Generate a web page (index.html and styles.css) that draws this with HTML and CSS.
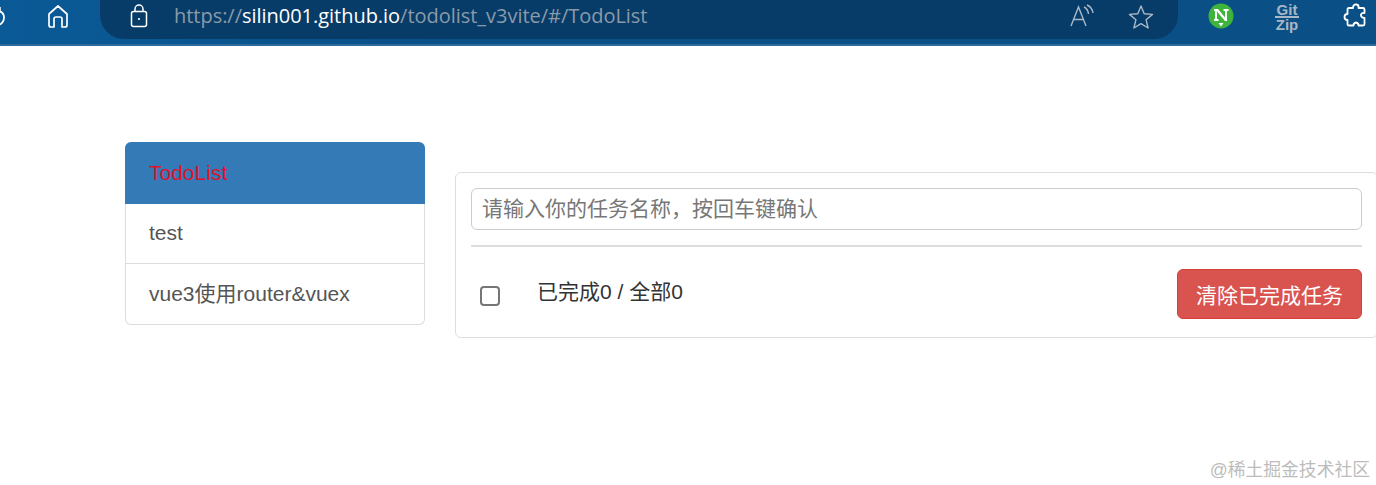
FILE: index.html
```html
<!DOCTYPE html>
<html lang="zh-CN">
<head>
  <meta charset="UTF-8">
  <title>TodoList</title>
  <link rel="stylesheet" href="styles.css">
</head>
<body>

<header class="browser-bar">
  <svg class="icon-reload" width="10" height="28" viewBox="0 0 10 28" fill="none" stroke="#fff" stroke-width="1.8">
    <path d="M-2 7.500 Q4 9 4 14.500 Q4 20 -2 22.500"/>
    <path d="M0 4 L0 9 L-4 9" stroke-width="1.500"/>
  </svg>
  <svg class="icon-home" width="24" height="26" viewBox="0 0 24 26" fill="none" stroke="#fff" stroke-width="1.7" stroke-linejoin="round">
    <path d="M3 11 L12 3 L21 11 V22 Q21 24 19 24 H16 V16 Q16 14 14 14 H10 Q8 14 8 16 V24 H5 Q3 24 3 22 Z"/>
  </svg>
  <div class="address">
    <svg class="icon-lock" width="18" height="24" viewBox="0 0 18 24" fill="none" stroke="#fff" stroke-width="1.500">
      <rect x="1.500" y="7.500" width="15" height="15" rx="2"/>
      <path d="M5 7.500 V5 A4 4 0 0 1 13 5 V7.500"/>
      <circle cx="9" cy="15" r="1.100" fill="#fff" stroke="none"/>
    </svg>
    <span class="url"><span class="url-dim">https://</span><span class="url-host">silin001.github.io</span><span class="url-dim">/todolist_v3vite/#/TodoList</span></span>
    <svg class="icon-read" width="24" height="24" viewBox="0 0 24 24" fill="none" stroke="#a9b9c8" stroke-width="1.400">
      <path d="M1 22 L8.500 3 L16 22 M4 15.500 H13"/>
      <path d="M14 3 Q18 5 18.500 10 M17 1 Q22 3 23 9"/>
    </svg>
    <svg class="icon-star" width="26" height="26" viewBox="0 0 26 26" fill="none" stroke="#a9b9c8" stroke-width="1.400" stroke-linejoin="round">
      <path d="M13 2 L16.200 9.800 L24.500 10.400 L18.100 15.800 L20.100 24 L13 19.600 L5.900 24 L7.900 15.800 L1.500 10.400 L9.800 9.800 Z"/>
    </svg>
  </div>
  <svg class="icon-ext-n" width="26" height="26" viewBox="0 0 26 26">
    <circle cx="13" cy="13" r="12.500" fill="#3fb43c"/>
    <path d="M6 6 H10 L17 14.500 V8 H15.500 V6 H20.500 V8 H19 V18 H17 L9 8.500 V16 H10.500 V18 H6 V16 H7 V8 H6 Z" fill="#fff"/>
    <path d="M10.500 20 H15.500 L13 23.500 Z" fill="#fff"/>
  </svg>
  <div class="gitzip">Git<i></i>Zip</div>
  <svg class="icon-puzzle" width="24" height="26" viewBox="0 0 24 26" fill="none" stroke="#fff" stroke-width="1.800" stroke-linejoin="round">
    <path d="M10 4 Q11 1 13.500 1.500 Q16 2 15.500 5 H20 Q21.500 5 21.500 6.500 V10 Q19 9.500 18 11.500 Q17.500 14.500 21.500 15 V21 Q21.500 22.500 20 22.500 H15.500 Q15.500 19.800 13 19.500 Q10.500 19.800 10.500 22.500 H6 Q4.500 22.500 4.500 21 V17 Q1.500 17 1.500 14 Q1.500 11 4.500 11 V6.500 Q4.500 5 6 5 H10 Z"/>
  </svg>
</header>

<main class="page">
  <nav class="nav-list">
    <a class="nav-item active">TodoList</a>
    <a class="nav-item">test</a>
    <a class="nav-item">vue3使用router&amp;vuex</a>
  </nav>

  <section class="todo-panel">
    <input class="todo-input" type="text" placeholder="请输入你的任务名称，按回车键确认">
    <hr class="todo-line">
    <div class="todo-footer">
      <input class="todo-check" type="checkbox">
      <span class="todo-count">已完成0 / 全部0</span>
      <button class="btn-clear">清除已完成任务</button>
    </div>
  </section>
</main>

<div class="watermark">@稀土掘金技术社区</div>

</body>
</html>
```

FILE: styles.css
```css
* {
  box-sizing: border-box;
}
html, body {
  height: 100%;
}
body {
  margin: 0;
  background: #fff;
  font-family: "Liberation Sans", "Noto Sans CJK SC", sans-serif;
  overflow: hidden;
  position: relative;
}

/* browser chrome */
.browser-bar {
  height: 46px;
  display: flex;
  align-items: flex-start;
  background: linear-gradient(90deg, #0a5a97 0%, #0a4f86 35%, #0a4f86 100%);
  border-bottom: 2px solid #2f6a9b;
  overflow: hidden;
}
.icon-reload {
  margin-top: 3px;
  flex: none;
}
.icon-home {
  margin: 3px 0 0 36px;
  flex: none;
}
.address {
  width: 1078px;
  height: 39px;
  margin-left: 30px;
  flex: none;
  display: flex;
  align-items: flex-start;
  background: #083c68;
  border-radius: 0 0 24px 24px;
  padding-left: 30px;
}
.icon-lock {
  margin-top: 4px;
  flex: none;
}
.url {
  margin: 2px 0 0 26px;
  width: 896px;
  font-family: "Open Sans", sans-serif;
  font-size: 20px;
  line-height: 27px;
  letter-spacing: -0.03px;
  white-space: nowrap;
}
.url-dim {
  color: #8b9aa8;
}
.url-host {
  color: #fff;
}
.icon-read {
  margin-top: 4px;
  flex: none;
}
.icon-star {
  margin: 4px 0 0 34px;
  flex: none;
}
.icon-ext-n {
  margin: 3px 0 0 30px;
  flex: none;
}
.gitzip {
  width: 30px;
  margin: 4px 0 0 38px;
  flex: none;
  font-size: 15px;
  line-height: 12px;
  font-weight: bold;
  color: #a9b7c4;
  text-align: center;
}
.gitzip i {
  display: block;
  width: 24px;
  height: 2px;
  background: #a9b7c4;
  margin: 0 auto 1px;
}
.icon-puzzle {
  margin: 3px 0 0 41px;
  flex: none;
}

/* page */
.page {
  display: flex;
  align-items: flex-start;
  gap: 30px;
  padding: 96px 0 0 125px;
}
.nav-list {
  width: 300px;
  flex: none;
}
.nav-item {
  display: block;
  height: 60px;
  padding: 0 23px;
  font-size: 21px;
  line-height: 57px;
  color: #555;
  border: 1px solid #ddd;
  border-top: 0;
}
.nav-item:last-child {
  height: 61px;
  line-height: 59px;
  border-radius: 0 0 6px 6px;
}
.nav-item.active {
  height: 62px;
  line-height: 62px;
  border: 0;
  padding-left: 24px;
  border-radius: 6px 6px 0 0;
  background: #337ab7;
  color: #e0112b;
}
.todo-panel {
  width: 923px;
  flex: none;
  margin-top: 30px;
  height: 166px;
  padding: 15px;
  border: 1px solid #ddd;
  border-radius: 6px;
}
.todo-input {
  display: block;
  width: 100%;
  height: 42px;
  padding: 0 10px;
  border: 1px solid #ccc;
  border-radius: 6px;
  font-family: inherit;
  font-size: 21px;
  color: #555;
  outline: none;
}
.todo-input::placeholder {
  color: #777;
  opacity: 1;
}
.todo-line {
  height: 2px;
  margin: 15px 0 0;
  border: 0;
  background: #ddd;
}
.todo-footer {
  display: flex;
  align-items: center;
  margin-top: 22px;
  height: 50px;
}
.todo-check {
  appearance: none;
  width: 20px;
  height: 20px;
  margin: 3px 0 0 9px;
  border: 2px solid #767676;
  border-radius: 4px;
  background: #fff;
  flex: none;
}
.todo-count {
  margin: -9px 0 0 37px;
  font-size: 21px;
  color: #333;
}
.btn-clear {
  margin-left: auto;
  width: 185px;
  height: 50px;
  padding: 0;
  border: 1px solid #d43f3a;
  border-radius: 6px;
  background: #d9534f;
  color: #fff;
  font-family: inherit;
  font-size: 21px;
}

.watermark {
  position: absolute;
  right: 6px;
  bottom: 3px;
  font-size: 17.800px;
  line-height: 24px;
  color: #bcbcbc;
}
```
